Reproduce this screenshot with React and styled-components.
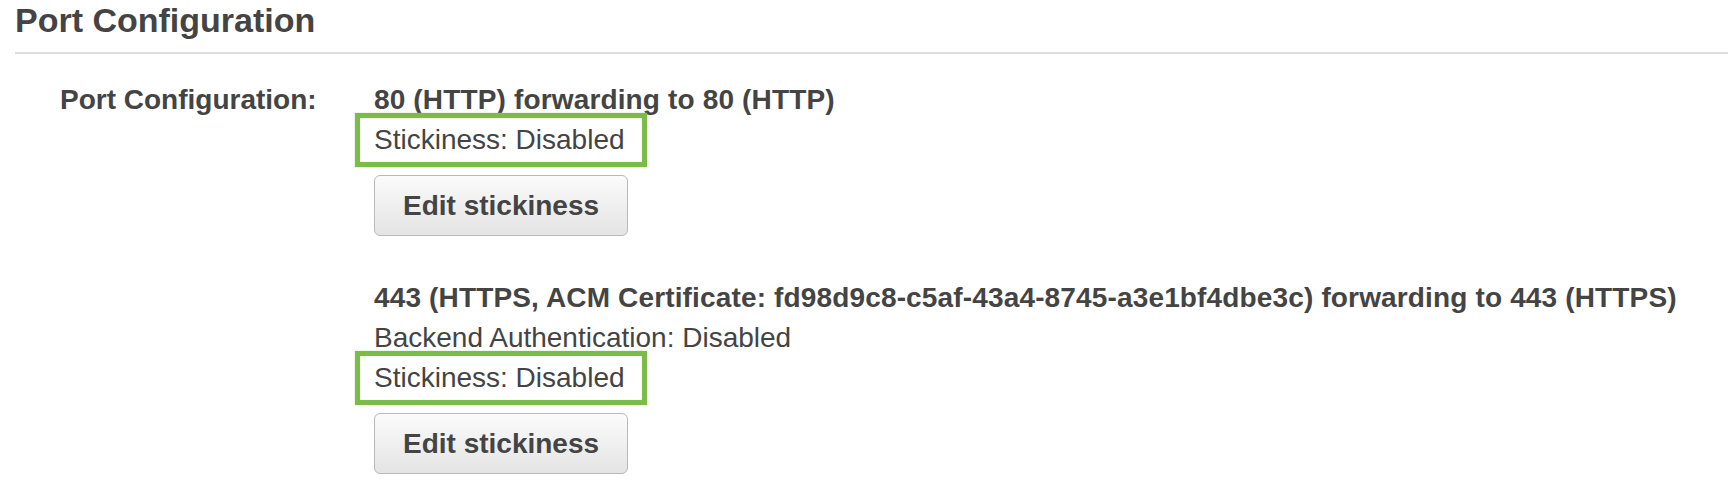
import styled, { createGlobalStyle } from "styled-components"

const GlobalStyle = createGlobalStyle`
  html, body {
    margin: 0;
    padding: 0;
    background: #fff;
  }
  body {
    font-family: "Liberation Sans", Arial, Helvetica, sans-serif;
    color: #444;
  }
`

const Page = styled.div`
  padding: 2px 0 0 15px;
`

const Title = styled.h2`
  margin: 0;
  font-size: 34px;
  line-height: 36px;
  font-weight: bold;
  color: #444;
`

const Divider = styled.hr`
  margin: 14px 0 0 0;
  border: 0;
  height: 2px;
  background: #dedede;
`

const Row = styled.div`
  display: flex;
  align-items: flex-start;
  margin-top: 26px;
  padding-left: 45px;
`

const Label = styled.div`
  width: 314px;
  flex-shrink: 0;
  font-size: 28px;
  line-height: 40px;
  font-weight: bold;
`

const Value = styled.div`
  display: flex;
  flex-direction: column;
  align-items: flex-start;
`

const Listener = styled.div`
  display: flex;
  flex-direction: column;
  align-items: flex-start;
  margin-top: ${(p) => (p.$first ? "0" : "42px")};
`

const Heading = styled.div`
  font-size: 28px;
  line-height: 40px;
  font-weight: bold;
  letter-spacing: 0.15px;
  white-space: nowrap;
`

const Line = styled.div`
  position: relative;
  font-size: 28px;
  line-height: 40px;
  white-space: nowrap;

  ${(p) =>
    p.$highlight &&
    `
    &::after {
      content: "";
      position: absolute;
      inset: -7px -22px -7px -19px;
      border: 5px solid #7bbb48;
      box-shadow: 0 0 1px #9ccf70, inset 0 0 1px #9ccf70;
      pointer-events: none;
    }
  `}
`

const Button = styled.button`
  margin-top: 15px;
  height: 61px;
  padding: 0 28px;
  box-sizing: border-box;
  border: 1px solid #b9b9b9;
  border-radius: 6px;
  background: linear-gradient(#fbfbfb, #e4e4e4);
  font-family: inherit;
  font-size: 28px;
  font-weight: bold;
  color: #444;
  cursor: pointer;
`

const listeners = [
  {
    heading: "80 (HTTP) forwarding to 80 (HTTP)",
    lines: [],
  },
  {
    heading:
      "443 (HTTPS, ACM Certificate: fd98d9c8-c5af-43a4-8745-a3e1bf4dbe3c) forwarding to 443 (HTTPS)",
    lines: ["Backend Authentication: Disabled"],
  },
]

const App = () => {
  return (
    <Page>
      <GlobalStyle />
      <Title>Port Configuration</Title>
      <Divider />
      <Row>
        <Label>Port Configuration:</Label>
        <Value>
          {listeners.map((l, i) => (
            <Listener key={i} $first={i === 0}>
              <Heading>{l.heading}</Heading>
              {l.lines.map((t) => (
                <Line key={t}>{t}</Line>
              ))}
              <Line $highlight>Stickiness: Disabled</Line>
              <Button>Edit stickiness</Button>
            </Listener>
          ))}
        </Value>
      </Row>
    </Page>
  )
}

export default App
